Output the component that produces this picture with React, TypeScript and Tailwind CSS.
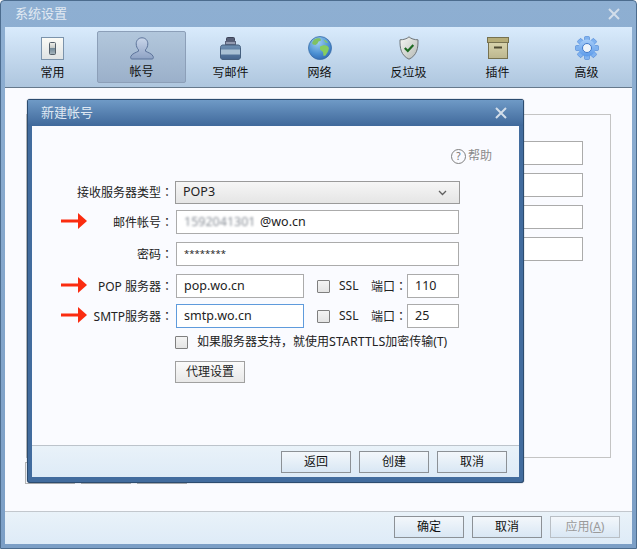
const tabs = [
  { label: "常用", icon: <GeneralIcon /> },
  { label: "帐号", icon: <UserIcon />, active: true },
  { label: "写邮件", icon: <InkIcon /> },
  { label: "网络", icon: <GlobeIcon /> },
  { label: "反垃圾", icon: <ShieldIcon /> },
  { label: "插件", icon: <BoxIcon /> },
  { label: "高级", icon: <GearIcon /> },
];

function GeneralIcon() {
  return (
    <svg width="23" height="23" viewBox="0 0 23 23">
      <defs>
        <linearGradient id="g1" x1="0" y1="0" x2="0" y2="1">
          <stop offset="0" stopColor="#fbfbf6" />
          <stop offset="1" stopColor="#dfe3e4" />
        </linearGradient>
        <linearGradient id="g2" x1="0" y1="0" x2="0" y2="1">
          <stop offset="0" stopColor="#f0f0ea" />
          <stop offset="0.42" stopColor="#c8ccc8" />
          <stop offset="0.46" stopColor="#6f8796" />
          <stop offset="1" stopColor="#a8b6be" />
        </linearGradient>
      </defs>
      <rect x="0.5" y="0.5" width="22" height="22" fill="url(#g1)" stroke="#7b93ab" />
      <rect x="8.5" y="5.5" width="6" height="12" rx="1" fill="url(#g2)" stroke="#55606a" />
    </svg>
  );
}

function UserIcon() {
  return (
    <svg width="24" height="24" viewBox="0 0 24 24">
      <defs>
        <linearGradient id="u1" x1="0" y1="0" x2="0" y2="1">
          <stop offset="0" stopColor="#c9d6ea" />
          <stop offset="1" stopColor="#8ea2c4" />
        </linearGradient>
      </defs>
      <path
        d="M12 .8c3.400 0 5.800 2.500 5.800 6 0 2.500-1 4.600-2.300 6v1.400c2 1.200 6.800 2.400 7.700 5.300.4 1.200 0 2.500-1 2.500H1.800c-1 0-1.400-1.300-1-2.500.9-2.900 5.700-4.100 7.700-5.300v-1.400C7.200 11.400 6.200 9.300 6.200 6.800c0-3.500 2.400-6 5.800-6z"
        fill="url(#u1)"
        stroke="#5b7299"
      />
    </svg>
  );
}

function InkIcon() {
  return (
    <svg width="21" height="23" viewBox="0 0 21 23">
      <defs>
        <linearGradient id="i1" x1="0" y1="0" x2="0" y2="1">
          <stop offset="0" stopColor="#6f90b2" />
          <stop offset="1" stopColor="#44648c" />
        </linearGradient>
      </defs>
      <rect x="6.500" y="0.500" width="8" height="4" rx="1" fill="#565e76" stroke="#3c4358" />
      <rect x="5.500" y="4.500" width="10" height="3" fill="#929ab0" stroke="#5a627a" />
      <path d="M3 8h15c1.500 0 2.500 1 2.500 2.500V20c0 1.500-1 2.500-2.500 2.500H3C1.500 22.500.5 21.500.5 20V10.500C.5 9 1.500 8 3 8z" fill="url(#i1)" stroke="#46607f" />
      <rect x="1" y="12.500" width="19" height="5" fill="#a9c1d4" />
    </svg>
  );
}

function GlobeIcon() {
  return (
    <svg width="24" height="24" viewBox="0 0 24 24">
      <defs>
        <radialGradient id="b1" cx="0.4" cy="0.25" r="0.85">
          <stop offset="0" stopColor="#9fd0f2" />
          <stop offset="0.6" stopColor="#4b8fd2" />
          <stop offset="1" stopColor="#2b62ac" />
        </radialGradient>
      </defs>
      <circle cx="12" cy="12" r="11.500" fill="url(#b1)" stroke="#3b6ea8" strokeWidth="0.8" />
      <path d="M6 3.500c2-1.200 5-1.500 6.500-.8l.5 1.800-2.500 1-1 2L7.500 9 5 8.500 4 7z" fill="#7fc163" />
      <path d="M12 10.500l4-1.500 3.500 1 1.500 2-1 3.500-2.500 4-2 .5-.5-4-3-2.500z" fill="#86cc5f" />
      <path d="M15.500 3.500l3 1.500 1.500 2-2.500-.5z" fill="#86cc5f" />
    </svg>
  );
}

function ShieldIcon() {
  return (
    <svg width="20" height="24" viewBox="0 0 20 24">
      <defs>
        <linearGradient id="s1" x1="0" y1="0" x2="1" y2="1">
          <stop offset="0" stopColor="#f7f8f4" />
          <stop offset="1" stopColor="#b3b8b4" />
        </linearGradient>
      </defs>
      <path d="M10 .8c2 2 5.500 3 9 3 .2 8.500-1 15.500-9 19.400C2 19.300.8 12.300 1 3.800c3.500 0 7-1 9-3z" fill="url(#s1)" stroke="#6d7478" />
      <path d="M5.800 12l3 3 5.500-6" fill="none" stroke="#1d6a22" strokeWidth="2.200" />
    </svg>
  );
}

function BoxIcon() {
  return (
    <svg width="22" height="22" viewBox="0 0 22 22">
      <defs>
        <linearGradient id="x1" x1="0" y1="0" x2="0" y2="1">
          <stop offset="0" stopColor="#d8d3ac" />
          <stop offset="1" stopColor="#bcb68e" />
        </linearGradient>
      </defs>
      <rect x="1.500" y="5.500" width="19" height="16" fill="url(#x1)" stroke="#76714f" />
      <rect x="0.500" y="0.500" width="21" height="5" fill="#b5ac78" stroke="#76714f" />
      <rect x="7" y="9.500" width="8" height="2" fill="#4f4b33" />
    </svg>
  );
}

function GearIcon() {
  const spokes = [0, 45, 90, 135, 180, 225, 270, 315];
  return (
    <svg width="24" height="24" viewBox="0 0 24 24">
      <defs>
        <linearGradient id="a1" x1="0" y1="0" x2="0" y2="1">
          <stop offset="0" stopColor="#a5ccf8" />
          <stop offset="1" stopColor="#5b9aea" />
        </linearGradient>
      </defs>
      {spokes.map((deg) => (
        <rect key={deg} x="9.500" y="0.500" width="5" height="6" rx="1" fill="#7fb2f0" stroke="#4a84d4" strokeWidth="0.6" transform={`rotate(${deg} 12 12)`} />
      ))}
      <circle cx="12" cy="12" r="8.500" fill="url(#a1)" />
      <circle cx="12" cy="12" r="4.500" fill="#eef4fa" stroke="#3f78c8" />
    </svg>
  );
}

function CloseIcon() {
  return (
    <svg width="12" height="12" viewBox="0 0 12 12">
      <path d="M1 1l10 10M11 1L1 11" stroke="#d3deea" strokeWidth="2" />
    </svg>
  );
}

function RedArrow() {
  return (
    <svg width="26" height="16" viewBox="0 0 26 16">
      <path d="M0 6.500h17V0l9 8-9 8V9.500H0z" fill="#fa2c10" />
    </svg>
  );
}

function Btn({ children, className = "border-[#8c9196] text-[#111]" }: { children: React.ReactNode; className?: string }) {
  return (
    <div className={`flex h-[22px] w-[70px] items-center justify-center border bg-gradient-to-b from-[#f3f7fb] to-[#d9e7f4] text-[12px] ${className}`}>
      {children}
    </div>
  );
}

function Field({ children, className = "border-[#ababab]" }: { children?: React.ReactNode; className?: string }) {
  return <div className={`flex h-[24px] items-center border bg-white pl-[7px] text-[12.500px] text-[#222] ${className}`}>{children}</div>;
}

function Check() {
  return <div className="size-[13px] rounded-[1px] border border-[#7f7f7f] bg-gradient-to-b from-[#f4f4f4] to-[#e4e4e4]" />;
}

// the colon sits centred in its box, which the TC face gives
function Colon() {
  return <span className="font-['Noto_Sans_CJK_TC',sans-serif]">：</span>;
}

function FormRow({ label, arrow, className = "", children }: { label: string; arrow?: boolean; className?: string; children: React.ReactNode }) {
  return (
    <div className={`flex items-center ${className}`}>
      <div className="flex w-[141px] items-center justify-between pl-[29px]">
        <span className="w-[26px] -translate-y-px">{arrow && <RedArrow />}</span>
        <span className="text-[12px] whitespace-nowrap text-[#222]">
          {label}
          <Colon />
        </span>
      </div>
      <div className="ml-[3px] flex items-center">{children}</div>
    </div>
  );
}

function SslPort({ port }: { port: string }) {
  return (
    <div className="flex items-center">
      <div className="ml-[13px]">
        <Check />
      </div>
      <span className="ml-[9px] w-[20px] text-[12px] text-[#222]">SSL</span>
      <span className="ml-[12px] w-[36px] text-[12px] whitespace-nowrap text-[#222]">
        端口
        <Colon />
      </span>
      <Field className="w-[52px] border-[#ababab]">{port}</Field>
    </div>
  );
}

function BackgroundPanel() {
  return (
    <div className="flex-1 bg-[#fafbff] px-[21px] pt-[26px]">
      <div className="flex h-[344px] w-[585px] flex-col items-end gap-[8px] border border-[#c4c4c4] pt-[26px] pr-[27px]">
        <div className="h-[24px] w-[120px] border border-[#ababab] bg-white" />
        <div className="h-[24px] w-[120px] border border-[#ababab] bg-white" />
        <div className="h-[24px] w-[120px] border border-[#ababab] bg-white" />
        <div className="h-[24px] w-[120px] border border-[#ababab] bg-white" />
      </div>
      <div className="mt-[4px] -ml-px flex gap-[6px]">
        <div className="h-[22px] w-[50px] border border-[#b4b4b4]" />
        <div className="h-[22px] w-[50px] border border-[#b4b4b4]" />
        <div className="h-[22px] w-[50px] border border-[#b4b4b4]" />
      </div>
    </div>
  );
}

function NewAccountDialog() {
  return (
    <div className="absolute top-[98px] left-[26px] flex h-[384px] w-[497px] flex-col rounded-[3px] border border-[#2c4c70] bg-[#426c9e] shadow-[0_0_1px_#1d3553]">
      <div className="flex h-[26px] items-center justify-between bg-gradient-to-b from-[#6f9ac6] to-[#40699b] pr-[16px] pl-[13px]">
        <span className="text-[13px] text-[#dfe8f2]">新建帐号</span>
        <CloseIcon />
      </div>
      <div className="mx-[4px] flex flex-1 flex-col bg-[#fafbff]">
        <div className="flex flex-1 flex-col">
          <div className="mt-[21px] flex items-center justify-end gap-[2px] pr-[27px] text-[12px] text-[#8a8a8a]">
            <span className="flex size-[15px] items-center justify-center rounded-full border border-[#808080] text-[10px] leading-none text-[#707070]">?</span>
            <span>帮助</span>
          </div>
          <FormRow label="接收服务器类型" className="mt-[16px]">
            <div className="-ml-px flex h-[23px] w-[285px] items-center justify-between border border-[#9a9a9a] bg-gradient-to-b from-[#f6f6f6] to-[#e5e5e5] pr-[12px] pl-[7px] text-[12.500px] text-[#222]">
              <span>POP3</span>
              <svg width="9" height="6" viewBox="0 0 9 6">
                <path d="M1 1l3.500 3.500L8 1" fill="none" stroke="#606060" strokeWidth="1.300" />
              </svg>
            </div>
          </FormRow>
          <FormRow label="邮件帐号" arrow className="mt-[6px]">
            <Field className="w-[283px] border-[#ababab]">
              <span className="w-[76px] overflow-hidden text-[#878d96] blur-[1px]">1592041301</span>
              <span>@wo.cn</span>
            </Field>
          </FormRow>
          <FormRow label="密码" className="mt-[8px]">
            <Field className="w-[283px] border-[#ababab] text-[9.500px]">
              <span className="text-[9.500px]">********</span>
            </Field>
          </FormRow>
          <FormRow label="POP 服务器" arrow className="mt-[8px]">
            <Field className="w-[128px] border-[#ababab]">pop.wo.cn</Field>
            <SslPort port="110" />
          </FormRow>
          <FormRow label="SMTP服务器" arrow className="mt-[6px]">
            <Field className="w-[128px] border-[#5f9bdc]">smtp.wo.cn</Field>
            <SslPort port="25" />
          </FormRow>
          <div className="mt-[5px] ml-[143px] flex items-center gap-[9px] text-[12px] text-[#222]">
            <Check />
            <span>
              如果服务器支持，就使用<span className="text-[12.500px]">STARTTLS</span>加密传输(T)
            </span>
          </div>
          <div className="mt-[9px] ml-[143px]">
            <div className="flex h-[22px] w-[70px] items-center justify-center border border-[#a0a0a0] bg-gradient-to-b from-[#fbfbfb] to-[#e8e8e8] text-[12px] text-[#222]">
              代理设置
            </div>
          </div>
        </div>
        <div className="flex h-[32px] items-center justify-end gap-[8px] border-t border-[#bcc3cb] bg-gradient-to-b from-[#e9f2f9] to-[#deebf7] pr-[12px]">
          <Btn>返回</Btn>
          <Btn>创建</Btn>
          <Btn>取消</Btn>
        </div>
      </div>
      <div className="h-[5px]" />
    </div>
  );
}

export default function App() {
  return (
    <div className="relative flex h-[549px] w-[637px] flex-col overflow-hidden rounded-t-[4px] border border-[#4c6c8e] bg-gradient-to-b from-[#8eafd2] to-[#7c9fc6] font-['Noto_Sans','Noto_Sans_CJK_SC',sans-serif]">
      <div className="flex h-[26px] shrink-0 items-center justify-between pr-[16px] pl-[14px]">
        <span className="text-[13px] text-[#e2eaf3]">系统设置</span>
        <CloseIcon />
      </div>
      <div className="mx-[4px] flex flex-1 flex-col">
        <div className="flex h-[61px] shrink-0 gap-0 border-b border-[#66798c] bg-gradient-to-b from-[#d9ebfc] to-[#aec6de] pt-[4px] pl-[3px]">
          {tabs.map((tab) => (
            <div
              key={tab.label}
              className={`flex h-[52px] w-[89px] flex-col items-center justify-between pt-[5px] pb-px text-[12px] text-[#111] ${
                tab.active ? "rounded-[2px] border border-[#8c9fb8] bg-gradient-to-b from-[#b2c7dc] to-[#9bb0ca]" : ""
              }`}
            >
              <div className="flex h-[24px] items-center justify-center">{tab.icon}</div>
              <span className="leading-[18px]">{tab.label}</span>
            </div>
          ))}
        </div>
        <BackgroundPanel />
        <div className="flex h-[33px] shrink-0 items-center justify-end gap-[8px] border-t border-[#c2c7cd] bg-gradient-to-b from-[#e9f2f9] to-[#deebf7] pr-[12px] pb-[2px]">
          <Btn>确定</Btn>
          <Btn>取消</Btn>
          <Btn className="border-[#b9bfc5] text-[#9a9a9a]">
            应用(<span className="underline">A</span>)
          </Btn>
        </div>
      </div>
      <div className="h-[4px] shrink-0" />
      <NewAccountDialog />
    </div>
  );
}
